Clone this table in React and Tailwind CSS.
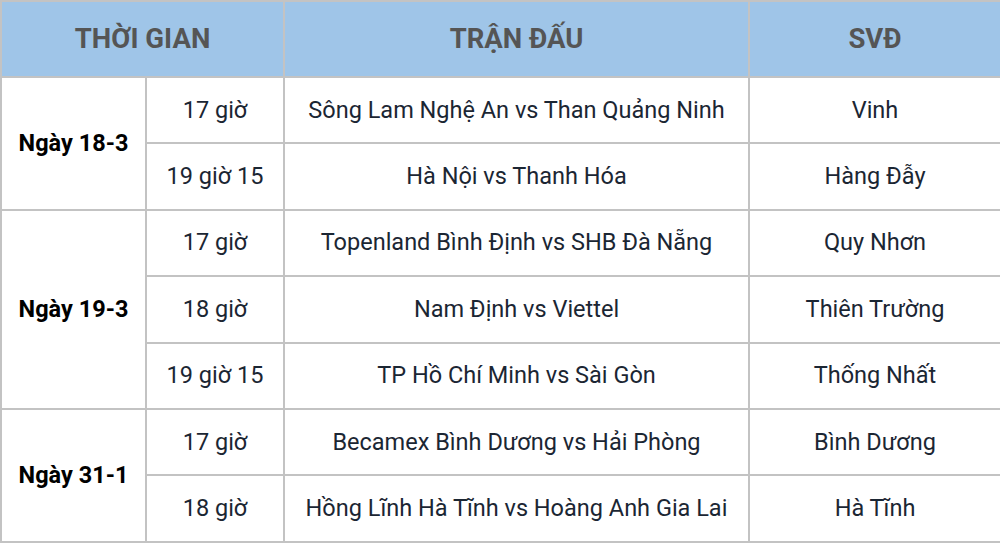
import React from "react";

const groups = [
  {
    date: "Ngày 18-3",
    rows: [
      ["17 giờ", "Sông Lam Nghệ An vs Than Quảng Ninh", "Vinh"],
      ["19 giờ 15", "Hà Nội vs Thanh Hóa", "Hàng Đẫy"],
    ],
  },
  {
    date: "Ngày 19-3",
    rows: [
      ["17 giờ", "Topenland Bình Định vs SHB Đà Nẵng", "Quy Nhơn"],
      ["18 giờ", "Nam Định vs Viettel", "Thiên Trường"],
      ["19 giờ 15", "TP Hồ Chí Minh vs Sài Gòn", "Thống Nhất"],
    ],
  },
  {
    date: "Ngày 31-1",
    rows: [
      ["17 giờ", "Becamex Bình Dương vs Hải Phòng", "Bình Dương"],
      ["18 giờ", "Hồng Lĩnh Hà Tĩnh vs Hoàng Anh Gia Lai", "Hà Tĩnh"],
    ],
  },
];

const cell = "border-2 border-[#c3c3c3] text-center align-middle p-0";

export default function App() {
  return (
    <div className="w-[1000px] h-[543px] bg-white overflow-hidden" style={{ fontFamily: "Roboto, 'Noto Sans', sans-serif" }}>
      <table className="w-[1000px] table-fixed border-collapse">
        <colgroup>
          <col className="w-[145px]" />
          <col className="w-[138px]" />
          <col className="w-[465px]" />
          <col className="w-[252px]" />
        </colgroup>
        <thead>
          <tr className="h-[76px] bg-[#9fc5e8]">
            <th colSpan={2} className={`${cell} text-[27.5px] font-bold text-[#555555]`}>THỜI GIAN</th>
            <th className={`${cell} text-[27.5px] font-bold text-[#555555]`}>TRẬN ĐẤU</th>
            <th className={`${cell} text-[27.5px] font-bold text-[#555555]`}>SVĐ</th>
          </tr>
        </thead>
        <tbody>
          {groups.map(g =>
            g.rows.map((r, i) => (
              <tr key={g.date + i} className="h-[66.4px]">
                {i === 0 && (
                  <td rowSpan={g.rows.length} className={`${cell} text-[23.5px] font-bold text-black`}>{g.date}</td>
                )}
                <td className={`${cell} text-[23.5px] text-[#1b2633]`}>{r[0]}</td>
                <td className={`${cell} text-[23.5px] text-[#1b2633]`}>{r[1]}</td>
                <td className={`${cell} text-[23.5px] text-[#1b2633]`}>{r[2]}</td>
              </tr>
            ))
          )}
        </tbody>
      </table>
    </div>
  );
}
